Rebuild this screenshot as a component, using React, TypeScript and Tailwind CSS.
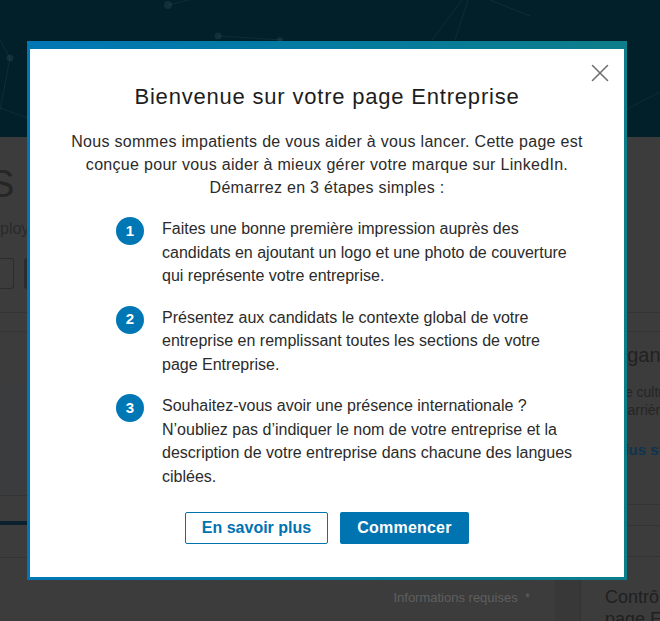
import { X } from "lucide-react";

const steps = [
  [
    "Faites une bonne première impression auprès des",
    "candidats en ajoutant un logo et une photo de couverture",
    "qui représente votre entreprise.",
  ],
  [
    "Présentez aux candidats le contexte global de votre",
    "entreprise en remplissant toutes les sections de votre",
    "page Entreprise.",
  ],
  [
    "Souhaitez-vous avoir une présence internationale ?",
    "N’oubliez pas d’indiquer le nom de votre entreprise et la",
    "description de votre entreprise dans chacune des langues",
    "ciblées.",
  ],
];

function Network() {
  return (
    <svg className="absolute inset-0 h-full w-full" viewBox="0 0 660 137" preserveAspectRatio="none">
      <g stroke="rgba(255,255,255,0.06)" strokeWidth="1" fill="none">
        <line x1="168" y1="5" x2="230" y2="-10" />
        <line x1="218" y1="36" x2="282" y2="40" />
        <line x1="10" y1="58" x2="0" y2="40" />
        <line x1="10" y1="58" x2="0" y2="110" />
        <line x1="462" y1="0" x2="432" y2="40" />
        <line x1="468" y1="0" x2="455" y2="40" />
        <line x1="490" y1="0" x2="530" y2="16" />
        <line x1="625" y1="110" x2="660" y2="92" />
        <line x1="0" y1="108" x2="27" y2="118" />
      </g>
      <g fill="rgba(255,255,255,0.07)">
        <circle cx="168" cy="5" r="4" />
        <circle cx="218" cy="36" r="3.5" />
        <circle cx="280" cy="40" r="3" />
        <circle cx="10" cy="58" r="3.5" />
      </g>
    </svg>
  );
}

export default function App() {
  return (
    <div
      className="relative h-[621px] w-[660px] overflow-hidden bg-[#3c3c3c]"
      style={{ fontFamily: '"Liberation Sans", Arial, sans-serif' }}
    >
      {/* page behind the overlay */}
      <div className="relative h-[137px] bg-[#01202a]">
        <Network />
      </div>

      <div className="flex">
        <div className="w-[555px] shrink-0">
          <div className="h-[25px]" />
          <div className="ml-[-11px] h-[44px] text-[38px] leading-[44px] text-[#262626]">S D</div>
          <div className="mt-[13px] h-[20px] text-[16px] leading-[20px] text-[#2a2a2a]">ployés</div>
          <div className="mt-[19px] flex gap-[10px]">
            <div className="h-[31px] w-[14px] rounded-r-[3px] border border-l-0 border-[#2c2c2c]" />
            <div className="h-[31px] w-[40px] rounded-[3px] border-l-[3px] border-[#2c2c2c]" />
          </div>
          <div className="h-[24px] border-b border-[#343434]" />
          <div className="h-[19px] border-b border-[#343434]" />
          <div className="h-[51px]" />
          <div className="h-[113px] border-b border-[#343434] bg-[#3b3c3d]" />
          <div className="h-[25px]" />
          <div className="h-[4px] bg-[#0b2130]" />
          <div className="h-[33px] border-b border-[#343434]" />
          <div className="pr-[25px] pt-[32px] text-right text-[13px] leading-[16px] text-[#5f5f5f]">
            Informations requises&nbsp;&nbsp;*
          </div>
        </div>

        <div className="w-[25px] shrink-0 bg-[#383838]" />

        <div className="flex-1 border-l border-[#333] pl-[24px]">
          <div className="ml-[-24px] h-[176px] border-b border-[#343434]" />
          <div className="ml-[-24px] h-[19px] border-b border-[#343434]" />
          <div className="whitespace-nowrap pt-[10px] text-[20px] leading-[26px] text-[#222]">Organisation</div>
          <div className="whitespace-nowrap pt-[15px] text-[14px] leading-[18px] text-[#252525]">
            <span className="ml-[-5px] block">Votre culture</span>
            <span className="block">et carrières</span>
          </div>
          <div className="ml-[-22px] whitespace-nowrap pt-[22px] text-[15px] font-bold leading-[18px] text-[#0d3550]">
            Voir plus sur
          </div>
          <div className="ml-[-24px] h-[46px] border-b border-[#343434]" />
          <div className="ml-[-24px] h-[21px] border-b border-[#343434]" />
          <div className="ml-[-24px] h-[31px] border-b border-[#333]" />
          <div className="whitespace-nowrap pt-[29px] text-[18px] leading-[22px] text-[#202020]">
            Contrôle
            <br />
            page Entreprise
          </div>
        </div>
      </div>

      {/* modal */}
      <div className="absolute left-[27px] top-[41px] h-[539px] w-[600px] bg-gradient-to-r from-[#0077b5] to-[#0e7d8a] px-[3px] pb-[3px] pt-[8px]">
        <div className="relative h-full w-full bg-white">
          <button className="absolute right-[9px] top-[9px] text-[#707070]">
            <X size={30} strokeWidth={1.3} />
          </button>

          <h1 className="pt-[34px] text-center text-[22px] leading-[28px] tracking-[0.8px] text-[#1d1d1d]">
            Bienvenue sur votre page Entreprise
          </h1>

          <p className="mt-[19px] text-center text-[16px] leading-[23px] tracking-[0.3px] text-[#2b2b2b]">
            Nous sommes impatients de vous aider à vous lancer. Cette page est
            <br />
            conçue pour vous aider à mieux gérer votre marque sur LinkedIn.
            <br />
            Démarrez en 3 étapes simples :
          </p>

          <ol className="mt-[18px] flex flex-col gap-[18px] pl-[86px]">
            {steps.map((lines, i) => (
              <li key={i} className="flex gap-[18px]">
                <span className="flex h-[28px] w-[28px] shrink-0 items-center justify-center rounded-full bg-[#0077b5] text-[15px] font-bold text-white">
                  {i + 1}
                </span>
                <span className="whitespace-nowrap text-[16px] leading-[23.5px] text-[#2b2b2b]">
                  {lines.map((l, j) => (
                    <span key={j} className="block">
                      {l}
                    </span>
                  ))}
                </span>
              </li>
            ))}
          </ol>

          <div className="mt-[24px] flex justify-center gap-[12px]">
            <button className="h-[32px] w-[143px] rounded-[2px] border border-[#0073b1] text-[16px] font-bold text-[#0073b1]">
              En savoir plus
            </button>
            <button className="h-[32px] w-[129px] rounded-[2px] bg-[#0073b1] text-[16px] font-bold tracking-[0.2px] text-white">
              Commencer
            </button>
          </div>
        </div>
      </div>
    </div>
  );
}
